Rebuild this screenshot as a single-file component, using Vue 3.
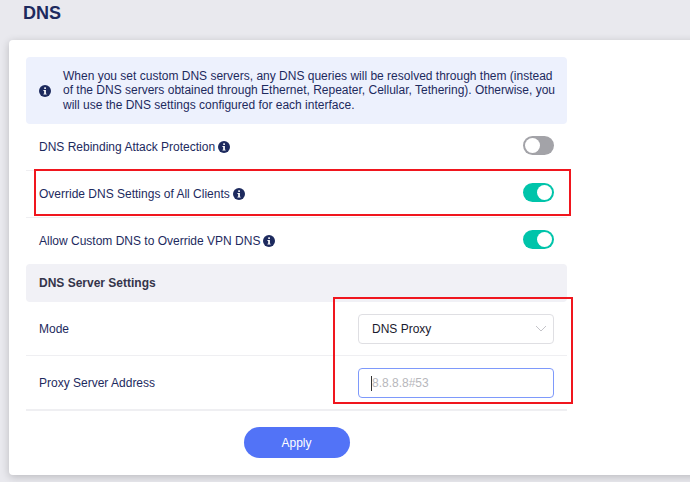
<script setup>
const toggles = [
  { label: 'DNS Rebinding Attack Protection', on: false },
  { label: 'Override DNS Settings of All Clients', on: true },
  { label: 'Allow Custom DNS to Override VPN DNS', on: true }
];
</script>

<template>
  <div class="page">
    <h1 class="title">DNS</h1>
    <div class="card">
      <div class="alert">
        <svg class="info alert-icon" viewBox="0 0 16 16"><circle cx="8" cy="8" r="8" fill="#1d2a5e" /><rect x="6.9" y="3" width="2.4" height="2.4" rx="0.6" fill="#fff" /><path d="M5.9 6.7h3.3v4.8h1v1.3H5.9v-1.3h1v-3.5h-1z" fill="#fff" /></svg>
        <p>When you set custom DNS servers, any DNS queries will be resolved through them (instead of the DNS servers obtained through Ethernet, Repeater, Cellular, Tethering). Otherwise, you will use the DNS settings configured for each interface.</p>
      </div>

      <div v-for="t in toggles" :key="t.label" class="row toggle-row">
        <span class="label">{{ t.label }}</span>
        <svg class="info" viewBox="0 0 16 16"><circle cx="8" cy="8" r="8" fill="#1d2a5e" /><rect x="6.9" y="3" width="2.4" height="2.4" rx="0.6" fill="#fff" /><path d="M5.9 6.7h3.3v4.8h1v1.3H5.9v-1.3h1v-3.5h-1z" fill="#fff" /></svg>
        <span class="switch" :class="{ on: t.on }"><i></i></span>
      </div>

      <div class="section">DNS Server Settings</div>

      <div class="row form-row mode-row">
        <span class="label">Mode</span>
        <div class="select">
          <span>DNS Proxy</span>
          <svg width="12" height="7" viewBox="0 0 12 7"><path d="M1 1l5 5 5-5" fill="none" stroke="#c4c4c9" stroke-width="1" /></svg>
        </div>
      </div>
      <div class="row form-row proxy-row">
        <span class="label">Proxy Server Address</span>
        <div class="input"><i class="caret"></i><span>8.8.8.8#53</span></div>
      </div>

      <div class="actions">
        <button type="button" class="apply">Apply</button>
      </div>
    </div>

    <div class="mark mark-one"></div>
    <div class="mark mark-two"></div>
  </div>
</template>

<style scoped>
.page {
  position: relative;
  width: 690px;
  height: 482px;
  overflow: hidden;
  background: #e9e9ee;
  font-family: "Liberation Sans", Arial, sans-serif;
  color: #1d2a5e;
}
.title {
  box-sizing: border-box;
  margin: 0;
  padding: 1px 0 0 23px;
  height: 40px;
  font-size: 18px;
  line-height: 25px;
  font-weight: 700;
}
.card {
  box-sizing: border-box;
  width: 700px;
  height: 435px;
  margin-left: 9px;
  padding: 17px 0 0 17px;
  background: #fff;
  border-radius: 4px;
  box-shadow: 0 2px 9px rgba(0, 0, 0, 0.2);
}
.alert {
  box-sizing: border-box;
  width: 541px;
  height: 67px;
  display: flex;
  align-items: center;
  gap: 12px;
  padding: 0 6px 0 13px;
  background: #edf1fd;
  border-radius: 4px;
}
.alert p {
  margin: 0;
  font-size: 12px;
  line-height: 14.3px;
}
.info {
  flex: none;
  width: 12px;
  height: 12px;
  margin-left: 3px;
}
.alert-icon {
  margin-left: 0;
}
.row {
  box-sizing: border-box;
  width: 541px;
  display: flex;
  align-items: center;
  padding: 0 13px;
  border-bottom: 1px solid #efeff2;
  font-size: 12px;
}
.toggle-row {
  height: 47px;
}
.toggle-row:nth-of-type(4) {
  height: 46px;
  border-bottom: none;
}
.switch {
  box-sizing: border-box;
  margin-left: auto;
  margin-bottom: 3px;
  width: 31px;
  height: 19px;
  padding: 2px;
  border-radius: 10px;
  background: #a3a3a8;
  display: flex;
}
.switch i {
  width: 15px;
  height: 15px;
  border-radius: 50%;
  background: #fff;
}
.switch.on {
  background: #00c4aa;
  justify-content: flex-end;
}
.section {
  box-sizing: border-box;
  width: 541px;
  height: 38px;
  line-height: 38px;
  padding-left: 13px;
  background: #f1f1f6;
  border-radius: 4px;
  font-size: 12px;
  font-weight: 700;
  color: #34344a;
}
.form-row {
  justify-content: space-between;
  padding-right: 13px;
}
.mode-row {
  height: 54px;
}
.proxy-row {
  height: 55px;
  border-bottom-width: 2px;
}
.select,
.input {
  box-sizing: border-box;
  width: 196px;
  height: 30px;
  display: flex;
  align-items: center;
  padding: 0 13px;
  border-radius: 4px;
  border: 1px solid #dfdfe3;
  font-size: 12px;
}
.select {
  justify-content: space-between;
  padding-right: 6px;
  color: #1a1a2e;
}
.input {
  position: relative;
  margin-top: 1px;
  border-color: #7e99fb;
  color: #b7b7bc;
}
.caret {
  position: absolute;
  left: 12px;
  top: 7px;
  width: 1px;
  height: 15px;
  background: #333;
}
.actions {
  width: 541px;
  display: flex;
  justify-content: center;
  padding-top: 16px;
}
.apply {
  width: 106px;
  height: 31px;
  border: none;
  border-radius: 16px;
  background: #5273f7;
  color: #fff;
  font-family: inherit;
  font-size: 12px;
}
.mark {
  position: absolute;
  box-sizing: border-box;
  border: 2px solid #f0161e;
}
.mark-one {
  left: 34px;
  top: 169px;
  width: 537px;
  height: 47px;
}
.mark-two {
  left: 333px;
  top: 297px;
  width: 240px;
  height: 107px;
}
</style>
